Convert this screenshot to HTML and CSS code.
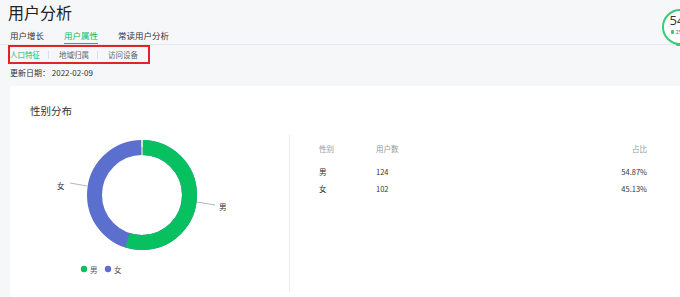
FILE: index.html
```html
<!DOCTYPE html>
<html lang="zh-CN">
<head>
    <meta charset="UTF-8">
    <meta name="viewport" content="width=device-width, initial-scale=1.0">
    <title>用户分析</title>
    <link rel="stylesheet" href="styles.css">
</head>
<body>
    <div class="page">
        <div class="page-header">
            <h1>用户分析</h1>
            <div class="tabs">
                <span class="tab">用户增长</span>
                <span class="tab active">用户属性</span>
                <span class="tab">常读用户分析</span>
            </div>
        </div>
        <div class="subtabs">
            <span class="subtab active">人口特征</span>
            <span class="sep"></span>
            <span class="subtab">地域归属</span>
            <span class="sep"></span>
            <span class="subtab">访问设备</span>
        </div>
        <div class="update-date">更新日期：&nbsp;2022-02-09</div>

        <div class="card">
            <h2 class="card-title">性别分布</h2>
            <div class="card-body">
                <div class="chart">
                    <svg width="279" height="160" viewBox="0 0 279 160">
                        <!-- 男 54.87%, 女 45.13%, r=47.5, circumference 298.45 -->
                        <g transform="rotate(-90 132 65)">
                            <circle cx="132" cy="65" r="47.5" fill="none" stroke="#5b6fce" stroke-width="15"></circle>
                            <circle cx="132" cy="65" r="47.5" fill="none" stroke="#07c160" stroke-width="15"
                                    stroke-dasharray="163.76 298.45"></circle>
                            <line x1="180" y1="65" x2="195" y2="65" stroke="#fff" stroke-width="1"></line>
                        </g>
                        <line x1="132" y1="10" x2="132" y2="25" stroke="#fff" stroke-width="1"></line>
                        <polyline points="187,72 205,75" fill="none" stroke="#9aa4b5" stroke-width="0.8"></polyline>
                        <polyline points="60,53 77,56" fill="none" stroke="#9aa4b5" stroke-width="0.8"></polyline>
                        <text x="209" y="80" class="pie-label">男</text>
                        <text x="47" y="59" class="pie-label">女</text>

                        <circle cx="74" cy="139" r="3.2" fill="#07c160"></circle>
                        <text x="80" y="142.5" class="legend-label">男</text>
                        <circle cx="98" cy="139" r="3.2" fill="#5b6fce"></circle>
                        <text x="104" y="142.5" class="legend-label">女</text>
                    </svg>
                </div>
                <div class="table-wrap">
                    <table class="data-table">
                        <thead>
                            <tr>
                                <th class="col-sex">性别</th>
                                <th class="col-count">用户数</th>
                                <th class="col-ratio">占比</th>
                            </tr>
                        </thead>
                        <tbody>
                            <tr>
                                <td>男</td>
                                <td>124</td>
                                <td class="col-ratio">54.87%</td>
                            </tr>
                            <tr>
                                <td>女</td>
                                <td>102</td>
                                <td class="col-ratio">45.13%</td>
                            </tr>
                        </tbody>
                    </table>
                </div>
            </div>
        </div>
    </div>

    <div class="score-badge">
        <span class="score-num">54</span>
        <span class="score-sub"><i class="dot"></i>25</span>
        <span class="score-bar"></span>
    </div>
</body>
</html>
```

FILE: styles.css
```css
body {
    margin: 0;
    font-family: "Noto Sans CJK SC", "Noto Sans", sans-serif;
    background-color: #f6f7f9;
    color: #333;
    overflow: hidden;
}

.page {
    width: 680px;
    height: 297px;
}

.page-header {
    border-bottom: 1px solid #e6e8eb;
    padding-left: 8px;
}

.page-header h1 {
    margin: 0;
    padding-top: 1px;
    font-size: 16px;
    font-weight: 400;
    line-height: 22px;
    color: #222;
}

.tabs {
    display: flex;
    gap: 20px;
    margin-top: 6px;
    padding-left: 2px;
}

.tab {
    font-size: 8.5px;
    line-height: 13px;
    padding-bottom: 1px;
    color: #333;
    border-bottom: 1px solid transparent;
}

.tab.active {
    color: #07c160;
    border-bottom-color: #07c160;
}

.subtabs {
    display: flex;
    align-items: center;
    width: 138px;
    height: 15px;
    margin-left: 8px;
    border: 2px solid #e0242b;
}

.subtab {
    font-size: 7.5px;
    line-height: 15px;
    color: #666;
}

.subtab.active {
    color: #07c160;
}

.sep {
    width: 1px;
    height: 8px;
    background-color: #dcdfe4;
    margin: 0 10px 0 8px;
}

.update-date {
    margin: 1px 0 0 10px;
    font-size: 8px;
    line-height: 16px;
    color: #333;
}

.card {
    margin: 5px 0 0 10px;
    height: 220px;
    background-color: #fff;
}

.card-title {
    margin: 0;
    padding: 17px 0 0 20px;
    font-size: 10.5px;
    font-weight: 400;
    line-height: 16px;
    color: #333;
}

.card-body {
    display: flex;
    margin-top: 11px;
}

.chart {
    width: 279px;
    height: 160px;
}

.chart svg {
    display: block;
}

.pie-label,
.legend-label {
    font-family: "Noto Sans CJK SC", sans-serif;
    font-size: 7.5px;
    fill: #333;
}

.legend-label {
    fill: #555;
}

.table-wrap {
    flex: 1;
    margin-top: 5px;
    height: 150px;
    border-left: 1px solid #eceef1;
    padding: 7px 32px 0 28px;
}

.data-table {
    width: 100%;
    border-collapse: collapse;
    font-size: 7.5px;
}

.data-table th {
    font-weight: 400;
    color: #999;
    text-align: left;
    line-height: 12px;
    padding-bottom: 10px;
}

.data-table td {
    color: #333;
    line-height: 12px;
    padding-bottom: 4px;
}

.col-sex {
    width: 55px;
}

.data-table .col-ratio {
    text-align: right;
}

.score-badge {
    position: absolute;
    left: 662px;
    top: 9px;
    width: 32px;
    height: 32px;
    border: 2px solid #3cc97a;
    border-radius: 50%;
    background-color: #fff;
    display: flex;
    flex-direction: column;
    align-items: center;
}

.score-num {
    margin-top: 2px;
    margin-left: -6px;
    font-family: "Open Sans", sans-serif;
    font-size: 13px;
    line-height: 14px;
    color: #333;
}

.score-sub {
    display: flex;
    align-items: center;
    gap: 2px;
    margin-top: 2px;
    margin-left: -8px;
    font-size: 5px;
    line-height: 6px;
    color: #666;
}

.dot {
    width: 3px;
    height: 4px;
    border-radius: 1px;
    background-color: #3cc97a;
}

.score-bar {
    position: absolute;
    bottom: -3px;
    left: 12px;
    width: 10px;
    height: 3px;
    border-radius: 1px;
    background-color: #3cc97a;
}
```
